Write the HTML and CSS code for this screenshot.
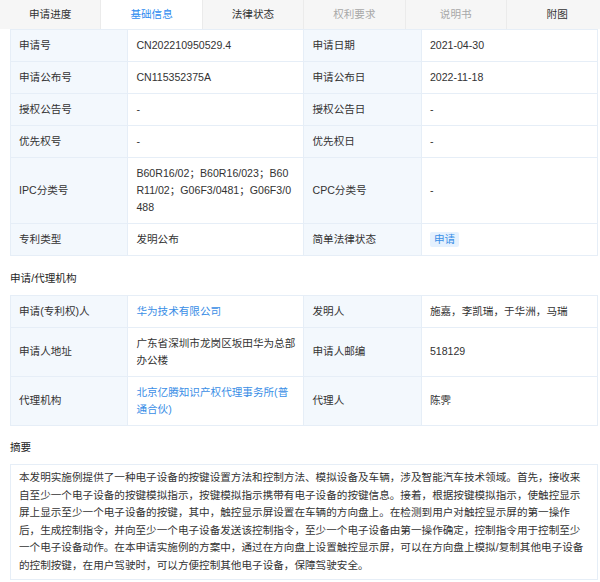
FILE: index.html
```html
<!DOCTYPE html>
<html lang="zh-CN">
<head>
<meta charset="utf-8">
<title>基础信息</title>
<link rel="stylesheet" href="styles.css">
</head>
<body>
<div class="tabs">
  <div class="tab">申请进度</div>
  <div class="tab active">基础信息</div>
  <div class="tab">法律状态</div>
  <div class="tab disabled">权利要求</div>
  <div class="tab disabled">说明书</div>
  <div class="tab">附图</div>
</div>

<table class="info">
  <colgroup><col class="c-l"><col class="c-v"><col class="c-l"><col class="c-v"></colgroup>
  <tr><th>申请号</th><td>CN202210950529.4</td><th>申请日期</th><td>2021-04-30</td></tr>
  <tr><th>申请公布号</th><td>CN115352375A</td><th>申请公布日</th><td>2022-11-18</td></tr>
  <tr><th>授权公告号</th><td>-</td><th>授权公告日</th><td>-</td></tr>
  <tr><th>优先权号</th><td>-</td><th>优先权日</th><td>-</td></tr>
  <tr><th>IPC分类号</th><td class="brk">B60R16/02；B60R16/023；B60R11/02；G06F3/0481；G06F3/0488</td><th>CPC分类号</th><td>-</td></tr>
  <tr><th>专利类型</th><td>发明公布</td><th>简单法律状态</th><td><span class="tag">申请</span></td></tr>
</table>

<div class="section-title">申请/代理机构</div>
<table class="info">
  <colgroup><col class="c-l"><col class="c-v"><col class="c-l"><col class="c-v"></colgroup>
  <tr><th>申请(专利权)人</th><td><span class="link">华为技术有限公司</span></td><th>发明人</th><td>施嘉，李凯瑞，于华洲，马瑞</td></tr>
  <tr><th>申请人地址</th><td>广东省深圳市龙岗区坂田华为总部办公楼</td><th>申请人邮编</th><td>518129</td></tr>
  <tr><th>代理机构</th><td><span class="link">北京亿腾知识产权代理事务所(普通合伙)</span></td><th>代理人</th><td>陈霁</td></tr>
</table>

<div class="section-title">摘要</div>
<div class="abstract">本发明实施例提供了一种电子设备的按键设置方法和控制方法、模拟设备及车辆，涉及智能汽车技术领域。首先，接收来自至少一个电子设备的按键模拟指示，按键模拟指示携带有电子设备的按键信息。接着，根据按键模拟指示，使触控显示屏上显示至少一个电子设备的按键，其中，触控显示屏设置在车辆的方向盘上。在检测到用户对触控显示屏的第一操作后，生成控制指令，并向至少一个电子设备发送该控制指令，至少一个电子设备由第一操作确定，控制指令用于控制至少一个电子设备动作。在本申请实施例的方案中，通过在方向盘上设置触控显示屏，可以在方向盘上模拟/复制其他电子设备的控制按键，在用户驾驶时，可以方便控制其他电子设备，保障驾驶安全。</div>
</body>
</html>
```

FILE: styles.css
```css
html, body {
  margin: 0;
  padding: 0;
  background: #ffffff;
}
body {
  width: 600px;
  overflow: hidden;
  font-family: "Liberation Sans", "Noto Sans CJK SC", sans-serif;
  font-size: 10.6px;
  color: #333333;
}
.tabs {
  display: flex;
  height: 29px;
  overflow: hidden;
  background: #f6f6f6;
}
.tab {
  flex: 0 0 101.4px;
  box-sizing: border-box;
  height: 29px;
  line-height: 29px;
  text-align: center;
  color: #333333;
  border-right: 1px solid #ebebeb;
  background: #f6f6f6;
}
.tab.active {
  background: #ffffff;
  color: #2f8cf0;
}
.tab.disabled {
  color: #a8a8a8;
}
.info {
  margin-left: 10px;
  width: 588px;
  border-collapse: collapse;
  table-layout: fixed;
}
.c-l { width: 20%; }
.c-v { width: 30%; }
.info th, .info td {
  border: 1px solid #e6eef7;
  padding: 7px 8px;
  line-height: 17px;
  text-align: left;
  vertical-align: middle;
  font-weight: normal;
}
.info th {
  background: #f3f8fd;
  color: #333333;
}
.info td {
  background: #ffffff;
  color: #333333;
}
.info td.brk {
  word-break: break-all;
}
.link {
  color: #3a8ee6;
}
.tag {
  display: inline-block;
  padding: 0 4px;
  line-height: 15px;
  background: #e5f1fe;
  color: #3a8ee6;
  border-radius: 2px;
}
.section-title {
  padding: 13.5px 10px 8px;
  line-height: 17px;
  color: #1f1f1f;
}
.abstract {
  margin-left: 10px;
  width: 588px;
  box-sizing: border-box;
  border: 1px solid #e6eef7;
  padding: 4px 8px;
  line-height: 17.6px;
  color: #333333;
}
```
